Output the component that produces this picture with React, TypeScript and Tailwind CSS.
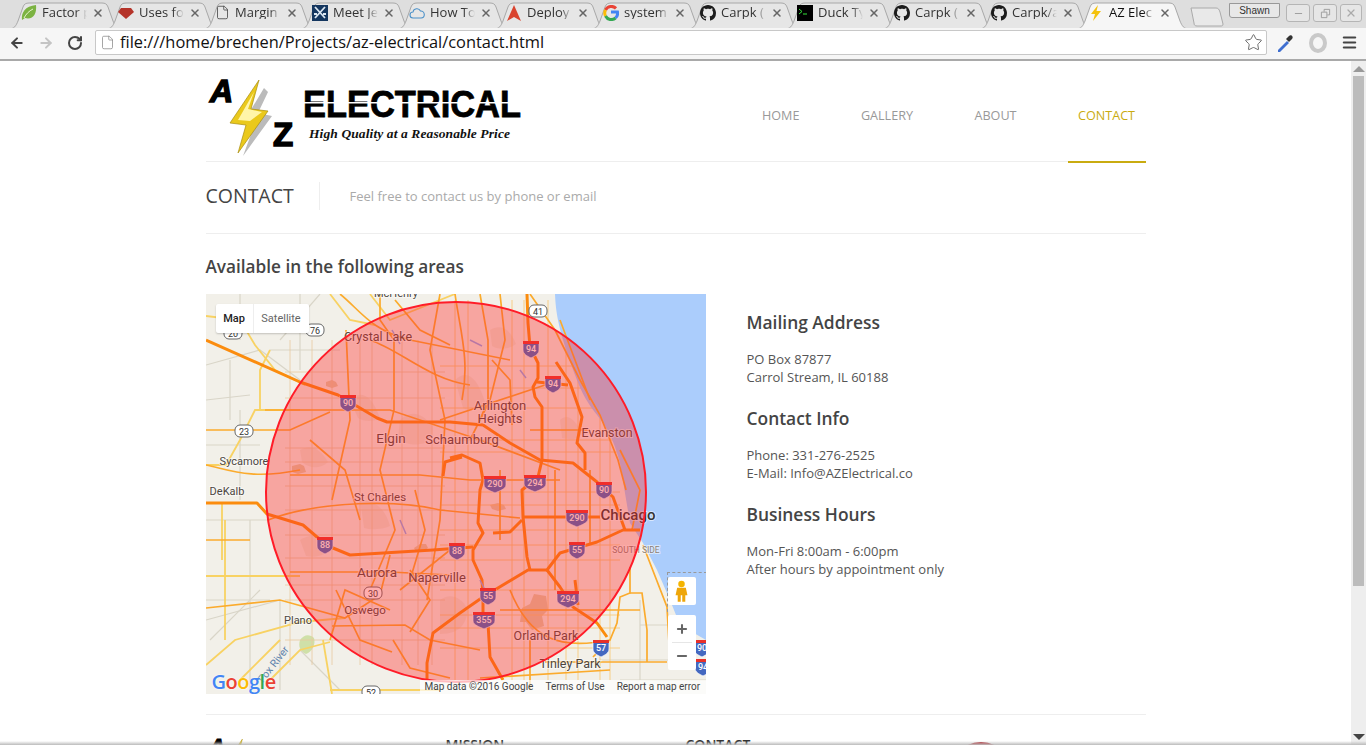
import { ArrowLeft, ArrowRight, RotateCw, File, Star, X, Menu, Minus, Plus } from "lucide-react";

const tabs = [
  { title: "Factor p", icon: "leaf" },
  { title: "Uses fo", icon: "ruby" },
  { title: "Margin", icon: "file" },
  { title: "Meet Je", icon: "meet" },
  { title: "How To", icon: "cloud" },
  { title: "Deploy", icon: "deploy" },
  { title: "system", icon: "google" },
  { title: "Carpk (", icon: "github" },
  { title: "Duck Ty", icon: "term" },
  { title: "Carpk (", icon: "github" },
  { title: "Carpk/a", icon: "github" },
  { title: "AZ Elec", icon: "bolt", active: true },
];

const GITHUB =
  "M8 0C3.58 0 0 3.58 0 8c0 3.54 2.29 6.53 5.47 7.59.4.07.55-.17.55-.38 0-.19-.01-.82-.01-1.49-2.01.37-2.53-.49-2.69-.94-.09-.23-.48-.94-.82-1.13-.28-.15-.68-.52-.01-.53.63-.01 1.08.58 1.23.82.72 1.21 1.87.87 2.33.66.07-.52.28-.87.51-1.07-1.78-.2-3.64-.89-3.64-3.95 0-.87.31-1.59.82-2.15-.08-.2-.36-1.02.08-2.12 0 0 .67-.21 2.2.82.64-.18 1.32-.27 2-.27s1.36.09 2 .27c1.53-1.04 2.2-.82 2.2-.82.44 1.1.16 1.92.08 2.12.51.56.82 1.27.82 2.15 0 3.07-1.87 3.75-3.65 3.95.29.25.54.73.54 1.48 0 1.07-.01 1.93-.01 2.2 0 .21.15.46.55.38A8.01 8.01 0 0 0 16 8c0-4.42-3.58-8-8-8z";

function TabIcon({ name }: { name: string }) {
  if (name === "leaf")
    return (
      <svg viewBox="0 0 16 16" className="w-4 h-4 shrink-0">
        <path d="M1 15C0 8 4 1 15 0c1 9-3 15-11 13l-3 2z" fill="#7cb342" />
        <path d="M3 13C5 9 8 6 12 4" stroke="#e8f5d0" fill="none" />
      </svg>
    );
  if (name === "ruby")
    return (
      <svg viewBox="0 0 16 16" className="w-4 h-4 shrink-0">
        <path d="M3 3h10l3 4-8 7-8-7z" fill="#b5342a" />
      </svg>
    );
  if (name === "file") return <File size={15} strokeWidth={1.3} className="text-[#444] shrink-0" />;
  if (name === "meet")
    return (
      <svg viewBox="0 0 16 16" className="w-4 h-4 shrink-0">
        <rect width="16" height="16" fill="#14365f" />
        <path d="M3 2l10 11M13 2L3 13M2 9h3M11 9h3" stroke="#dbe7f2" strokeWidth="1.8" />
      </svg>
    );
  if (name === "cloud")
    return (
      <svg viewBox="0 0 16 16" className="w-4 h-4 shrink-0">
        <path d="M4 13a3 3 0 0 1 0-6 4 4 0 0 1 7.500-1A3.500 3.500 0 0 1 12 13z" fill="none" stroke="#4a90c8" strokeWidth="1.1" />
      </svg>
    );
  if (name === "deploy")
    return (
      <svg viewBox="0 0 16 16" className="w-4 h-4 shrink-0">
        <path d="M8 0l7 16-7-4-7 4z" fill="#d9442f" />
      </svg>
    );
  if (name === "google")
    return (
      <svg viewBox="0 0 16 16" className="w-4 h-4 shrink-0" fill="none" strokeWidth="3">
        <path d="M13 3.400A6.500 6.500 0 0 0 2.500 5" stroke="#ea4335" />
        <path d="M2.500 5a6.500 6.500 0 0 0 0 6" stroke="#fbbc05" />
        <path d="M2.500 11a6.500 6.500 0 0 0 10 2" stroke="#34a853" />
        <path d="M12.500 13A6.500 6.500 0 0 0 14.500 7H8" stroke="#4285f4" />
      </svg>
    );
  if (name === "github")
    return (
      <svg viewBox="0 0 16 16" className="w-4 h-4 shrink-0">
        <path d={GITHUB} fill="#1b1b1b" />
      </svg>
    );
  if (name === "term")
    return (
      <svg viewBox="0 0 16 16" className="w-4 h-4 shrink-0">
        <rect width="16" height="16" fill="#000" />
        <path d="M2 4l3 2.500L2 9M6 9h4" stroke="#35e23a" fill="none" />
      </svg>
    );
  return (
    <svg viewBox="0 0 16 16" className="w-4 h-4 shrink-0">
      <path d="M10 0L3 9h4l-2 7 8-10H8.500z" fill="#f4c20d" />
    </svg>
  );
}

function Tab({ title, icon, active }: { title: string; icon: string; active?: boolean }) {
  return (
    <div className="relative w-[113px] h-[26px] -mr-[16px] flex items-center pl-[12px] pr-[18px] pb-[5px] shrink-0">
      <svg viewBox="0 0 113 27" className="absolute inset-0 w-[113px] h-[27px]">
        <path
          d="M0 27C5 27 7 24 9 19L14 5C15 2 17 1 20 1H93C96 1 98 2 99 5L104 19C106 24 108 27 113 27"
          fill={active ? "#f6f6f6" : "#e6e6e6"}
          stroke="#a8a8a8"
        />
      </svg>
      <div className="relative flex items-center gap-[5px] w-full">
        <TabIcon name={icon} />
        <span
          className={`flex-1 overflow-hidden whitespace-nowrap text-[13px] leading-none [mask-image:linear-gradient(to_right,black_75%,transparent)] ${
            active ? "text-[#111]" : "text-[#333]"
          }`}
        >
          {title}
        </span>
        <X size={12} strokeWidth={3} className="text-[#666] shrink-0" />
      </div>
    </div>
  );
}

function BrowserChrome() {
  return (
    <div className="h-[61px] shrink-0 flex flex-col font-['Open_Sans',sans-serif]">
      <div className="h-[28px] bg-[#dedede] flex items-end pl-[9px] overflow-hidden relative">
        {tabs.map((t, i) => (
          <Tab key={i} title={t.title} icon={t.icon} active={t.active} />
        ))}
        <svg viewBox="0 0 34 20" className="w-[34px] h-[20px] ml-[17px] mb-[1px] shrink-0">
          <path d="M1 1H26C28 1 29 2 30 5L33 17C33 19 32 19 30 19H7C5 19 4 18 4 16z" fill="#e9e9e9" stroke="#aaa" />
        </svg>
        <div className="ml-auto self-start flex items-start gap-[3px] pr-[4px] pt-[4px]">
          <div className="mr-[3px] -mt-[1px] w-[51px] h-[15px] rounded-b-[3px] border border-[#999] bg-[#e8e8e8] text-[10px] leading-[13px] text-center text-[#333] font-['Liberation_Sans',sans-serif]">
            Shawn
          </div>
          <div className="w-[24px] h-[18px] flex items-center justify-center border border-[#b5b5b5] rounded-[3px] bg-[#e6e6e6] text-[#999]">
            <Minus size={11} />
          </div>
          <div className="w-[24px] h-[18px] flex items-center justify-center border border-[#b5b5b5] rounded-[3px] bg-[#e6e6e6] text-[#999]">
            <svg viewBox="0 0 12 12" className="w-[11px] h-[11px]" fill="none" stroke="currentColor">
              <path d="M1.500 4.500h6v6h-6zM4.500 4V1.500h6v6H8" />
            </svg>
          </div>
          <div className="w-[22px] h-[18px] flex items-center justify-center border border-[#b5b5b5] rounded-[3px] bg-[#e6e6e6] text-[#aaa]">
            <X size={12} strokeWidth={2.5} />
          </div>
        </div>
      </div>
      <div className="h-[33px] bg-[#f6f6f6] border-b-2 border-[#a9a9a9] flex items-center pb-[2px]">
        <div className="w-[95px] flex items-center pl-[9px] gap-[13px] shrink-0">
          <ArrowLeft size={16} strokeWidth={3} className="text-[#444]" />
          <ArrowRight size={16} strokeWidth={3} className="text-[#c4c4c4]" />
          <RotateCw size={16} strokeWidth={3} className="text-[#444]" />
        </div>
        <div className="flex-1 h-[25px] bg-white border border-[#c8c8c8] rounded-[2px] flex items-center pl-[4px] pr-[3px]">
          <File size={15} strokeWidth={1.2} className="text-[#888] mr-[5px]" />
          <span className="text-[16.4px] text-[#111] leading-none whitespace-nowrap">file:///home/brechen/Projects/az-electrical/contact.html</span>
          <Star size={19} strokeWidth={1.2} className="ml-auto text-[#666]" />
        </div>
        <div className="w-[99px] flex items-center pl-[8px] gap-[13px] shrink-0">
          <svg viewBox="0 0 20 20" className="w-5 h-5">
            <path d="M3 17l9-9 2 2-9 9H3z" fill="#3f6fd0" />
            <path d="M11 6l3-3c2-2 5 1 3 3l-3 3z" fill="#333" />
          </svg>
          <svg viewBox="0 0 20 20" className="w-5 h-5">
            <ellipse cx="10" cy="10" rx="7" ry="8" fill="none" stroke="#c9c9c9" strokeWidth="4" />
          </svg>
          <Menu size={17} strokeWidth={3} className="text-[#444]" />
        </div>
      </div>
    </div>
  );
}

function Logo({ small }: { small?: boolean }) {
  return (
    <svg viewBox="206 74 320 84" className={small ? "w-[218px] h-[57px]" : "w-[320px] h-[84px]"}>
      <text x="210" y="102" fontFamily="Liberation Sans" fontWeight="700" fontStyle="italic" fontSize="32" stroke="#000" strokeWidth="1.5" fill="#000">
        A
      </text>
      <text x="273" y="146" fontFamily="Liberation Sans" fontWeight="700" fontSize="33" stroke="#000" strokeWidth="1.5" fill="#000">
        Z
      </text>
      <path d="M264 88L246 118 256 121 243 156 272 116 258 113 268 92z" fill="#bbb" />
      <path d="M259 80L230 123 246 125 238 153 268 111 251 109z" fill="#eac91c" stroke="#a88d10" strokeWidth="0.7" />
      <path d="M254 92L238 120 250 121 262 112 248 109z" fill="#fff5a8" />
      <text
        x="303"
        y="116.500"
        fontFamily="Liberation Sans"
        fontWeight="700"
        fontSize="37"
        textLength="218"
        lengthAdjust="spacingAndGlyphs"
        fill="#000"
        stroke="#000"
        strokeWidth="0.8"
      >
        ELECTRICAL
      </text>
      <rect x="303" y="102" width="218" height="1.500" fill="#fff" />
      <text x="309" y="138" fontFamily="Liberation Serif" fontWeight="700" fontStyle="italic" fontSize="13.500" textLength="201" fill="#111">
        High Quality at a Reasonable Price
      </text>
    </svg>
  );
}

const highways = [
  "M206 340L300 382 338 395 377 418 387 422H450L483 425 510 443 540 460 573 463 597 482 613 497 625 530",
  "M527 294L528 323 530 347 538 363V378L533 387 535 397 542 407V460L538 477 522 490 523 517 527 557 530 570",
  "M556 362L570 383 582 417 577 443 585 453V470",
  "M537 382L568 385",
  "M450 458L462 455 480 463 483 480 480 490 478 523 483 533 473 550V560L482 580 483 597V613L488 623 490 657 503 680",
  "M523 517H600",
  "M493 533L510 532 522 520",
  "M427 680V663L433 633 460 613 483 597 528 570H547L560 553 597 542 623 530H640",
  "M206 503H257L267 514 303 525 317 537 333 548 350 555 433 550 473 547",
  "M547 570L560 587 573 607 597 623 607 637",
  "M443 476L445 462 462 457",
  "M575 580L578 605",
];

const arterials = [
  "M206 430H290L330 412",
  "M206 540H250",
  "M206 465C230 470 250 480 300 470",
  "M206 608L280 600 345 618 380 595 390 555",
  "M340 294C360 310 370 330 410 340L510 360",
  "M346 330L350 420 332 500",
  "M380 294V320L394 340V410L380 470 395 530 370 590",
  "M440 294L430 350 445 420 440 520 427 600",
  "M480 294L488 340V400L480 420",
  "M500 294L505 340 490 400 470 440",
  "M265 410H390L480 440 560 470",
  "M290 475H420L470 480H560",
  "M268 520C320 500 400 500 440 510L520 518",
  "M290 572H390L450 575",
  "M332 626L405 625 430 640 480 650",
  "M330 640L345 590 390 610",
  "M393 640L410 668 450 678",
  "M400 590L450 550",
  "M410 632L430 600 410 570",
  "M530 294L555 330 580 380 600 415 618 460 626 490",
  "M620 450L640 490 632 530",
  "M630 567V593L620 597 617 623 610 640 593 657",
  "M630 593H642L647 630V662",
  "M643 545L667 607 670 662",
  "M545 662H667",
  "M480 678L610 670",
  "M500 610H640",
  "M440 420L560 380",
  "M560 320L590 400",
  "M492 360L510 380 512 425",
  "M530 430L590 430",
  "M500 470V540",
  "M555 470V590",
  "M590 470V545",
  "M510 590C530 640 560 650 610 640",
  "M530 640V690",
  "M370 340C400 350 430 380 470 385",
  "M310 440L345 470 360 520",
  "M336 590L360 640 392 652",
  "M415 490L425 530 410 580",
  "M455 294C460 330 470 360 462 400",
  "M395 300L420 330 450 345",
];

const yellowRoads = [
  "M206 665L235 640 300 622 345 618",
  "M206 576H300",
  "M225 520V640",
  "M206 465H226L240 440 255 410H300",
  "M206 316L240 320 255 345 275 370 305 385",
  "M260 410V370L270 350",
  "M330 294L350 320 375 325",
  "M370 294L390 320 455 294",
  "M323 640L332 694",
  "M270 680L300 650 330 642",
  "M330 690H440",
  "M222 503V560",
  "M240 680L280 640",
];

const greyRoads = [
  "M206 365L260 350 300 380",
  "M230 360V420",
  "M206 400L250 395",
  "M240 410V500",
  "M206 620L280 600",
  "M250 520V690",
  "M280 600V690",
  "M206 520H270",
  "M210 640L260 590",
  "M300 650L340 690",
  "M240 294V340",
  "M300 294V370",
  "M640 600V680",
  "M600 660H706",
  "M620 680H706",
  "M640 625H680",
  "M206 600H270",
  "M270 350H340",
  "M206 445H260",
  "M320 294L280 340",
];

const shields = [
  { x: 348, y: 403, n: "90" },
  { x: 531, y: 349, n: "94" },
  { x: 553, y: 384, n: "94" },
  { x: 495, y: 484, n: "290", wide: true },
  { x: 535, y: 483, n: "294", wide: true },
  { x: 604, y: 490, n: "90" },
  { x: 577, y: 518, n: "290", wide: true },
  { x: 577, y: 550, n: "55" },
  { x: 325, y: 545, n: "88" },
  { x: 457, y: 551, n: "88" },
  { x: 488, y: 596, n: "55" },
  { x: 568, y: 599, n: "294", wide: true },
  { x: 484, y: 620, n: "355", wide: true },
  { x: 601, y: 648, n: "57" },
  { x: 702, y: 648, n: "90" },
  { x: 703, y: 667, n: "94" },
];

const roadBadges = [
  { x: 233, y: 333, n: "20" },
  { x: 315, y: 330, n: "76" },
  { x: 244, y: 431, n: "23" },
  { x: 538, y: 311, n: "41" },
  { x: 373, y: 593, n: "30" },
  { x: 371, y: 692, n: "52" },
];

const labels = [
  { x: 378, y: 341, t: "Crystal Lake", s: 12.5 },
  { x: 396, y: 297, t: "McHenry", s: 11 },
  { x: 500, y: 410, t: "Arlington", s: 13 },
  { x: 500, y: 423, t: "Heights", s: 13 },
  { x: 391, y: 443, t: "Elgin", s: 13.5 },
  { x: 462, y: 444, t: "Schaumburg", s: 13 },
  { x: 607, y: 437, t: "Evanston", s: 12.5 },
  { x: 244, y: 465, t: "Sycamore", s: 11 },
  { x: 227, y: 495, t: "DeKalb", s: 11 },
  { x: 380, y: 501, t: "St Charles", s: 11.5 },
  { x: 628, y: 520, t: "Chicago", s: 15 },
  { x: 636, y: 553, t: "SOUTH SIDE", s: 8.5 },
  { x: 377, y: 577, t: "Aurora", s: 13.5 },
  { x: 437, y: 582, t: "Naperville", s: 13 },
  { x: 365, y: 614, t: "Oswego", s: 11.5 },
  { x: 298, y: 624, t: "Plano", s: 11 },
  { x: 546, y: 640, t: "Orland Park", s: 12.5 },
  { x: 570, y: 668, t: "Tinley Park", s: 12.5 },
];

const towns = [
  "M400 420c10-10 22-8 32 6 2 10-4 18-12 18-8 2-20-2-22-6z",
  "M455 380c8-8 20-10 30 22-6 8-16 10-22 6z",
  "M360 500c10 0 24 4 30 26-8 4-20 4-26 2z",
  "M300 540c10-6 20-8 30 10-6 6-16 8-24 6z",
  "M350 400c8-8 20-10 30 18-6 4-16 4-22 0z",
  "M440 600c8-6 20-6 28 10-2 12-6 24-28 24z",
  "M560 420c6-6 14-4 22 14-4 6-12 6-20 4z",
  "M490 330c10-6 20-2 26 14-8 6-18 6-24 2z",
  "M300 450c10-6 20-2 28 12-8 8-20 6-26 0z",
];

const tanPatches = [
  "M522 608l8-4 4-10 12 2 2 14-6 6 2 10-12 4-6-8-6 0z",
  "M292 466l8-2 4 2 2 6-8 2-6-2z",
  "M326 382l6-2 4 2 2 4-6 2-6-2z",
  "M414 548l6-4 6 0 2 4-6 4-6 0z",
  "M490 505l8-2 6 2 2 4-8 2-6-2z",
];

function MapArt() {
  const rows = [366, 388, 408, 440, 452, 492, 505, 530, 545, 560, 590, 615, 628, 648];
  const cols = [455, 468, 512, 524, 548, 566, 578, 600, 610];
  const westRows = [372, 398, 448, 462, 486, 510, 535, 558, 585, 600, 640];
  const westCols = [290, 312, 332, 360, 372, 402, 418, 432];
  return (
    <svg viewBox="206 294 500 400" className="absolute inset-0 w-full h-full font-['Roboto',sans-serif]">
      <rect x="206" y="294" width="500" height="400" fill="#f2f0e9" />
      {towns.map((d, i) => (
        <path key={i} d={d} fill="#ece6d6" />
      ))}
      {tanPatches.map((d, i) => (
        <path key={i} d={d} fill="#e3cba6" />
      ))}
      <path d="M300 640c4-6 10-6 14-2 2 6-2 14-8 16-6-2-8-8-6-14z" fill="#cfe0a8" />
      {greyRoads.map((d, i) => (
        <path key={i} d={d} fill="none" stroke="#d9d5c8" strokeWidth="1.2" />
      ))}
      {westRows.map((y) => (
        <path key={y} d={`M285 ${y}H445`} stroke="#e8c9a0" strokeWidth="0.8" />
      ))}
      {westCols.map((x) => (
        <path key={x} d={`M${x} 340V665`} stroke="#e8c9a0" strokeWidth="0.8" />
      ))}
      {rows.map((y) => (
        <path key={y} d={`M440 ${y}H620`} stroke="#f7c97a" strokeWidth="0.9" />
      ))}
      {cols.map((x) => (
        <path key={x} d={`M${x} 300V680`} stroke="#f7c97a" strokeWidth="0.9" />
      ))}
      <path d="M555 294C556 320 562 340 577 380S607 413 620 463L630 523 643 543 657 570 670 600 680 625 706 640V294z" fill="#abcdfc" />
      {yellowRoads.map((d, i) => (
        <path key={i} d={d} fill="none" stroke="#f8d263" strokeWidth="1.800" />
      ))}
      {arterials.map((d, i) => (
        <path key={i} d={d} fill="none" stroke="#fbab2d" strokeWidth="1.700" />
      ))}
      {highways.map((d, i) => (
        <path key={i} d={d} fill="none" stroke="#fb8c0e" strokeWidth="3" strokeLinejoin="round" />
      ))}
      <path d="M392 330l8 14M470 340l12 6M400 520l6 14M520 370l6 8M480 580l6 12" stroke="#8fa9ef" strokeWidth="1.500" />
      {labels.map((l) => (
        <text
          key={l.t}
          x={l.x}
          y={l.y}
          fontSize={l.s}
          textAnchor="middle"
          fill={l.t === "Chicago" ? "#333" : l.t === "SOUTH SIDE" ? "#8b7f76" : "#4c4640"}
          fontWeight={l.t === "Chicago" ? 500 : 400}
          stroke="#fff"
          strokeOpacity="0.55"
          strokeWidth="2"
          paintOrder="stroke"
        >
          {l.t}
        </text>
      ))}
      <text x="273" y="668" fontSize="10.500" fill="#5e83ad" textAnchor="middle" transform="rotate(-52 273 664)">
        Fox River
      </text>
      {roadBadges.map((b) => (
        <g key={b.n}>
          <rect x={b.x - 9} y={b.y - 6} width="18" height="12" rx="5" fill="#fff" stroke="#666" />
          <text x={b.x} y={b.y + 3.5} fontSize="9" textAnchor="middle" fill="#333">
            {b.n}
          </text>
        </g>
      ))}
      {shields.map((s, i) => {
        const w = s.wide ? 11 : 8;
        return (
          <g key={i}>
            <path
              d={`M${s.x - w} ${s.y - 7}H${s.x + w}V${s.y + 1}C${s.x + w} ${s.y + 5} ${s.x + 4} ${s.y + 7} ${s.x} ${s.y + 9}C${s.x - 4} ${s.y + 7} ${s.x - w} ${s.y + 5} ${s.x - w} ${s.y + 1}z`}
              fill="#4468c0"
              stroke="#fff"
              strokeWidth="0.7"
            />
            <rect x={s.x - w} y={s.y - 8} width={2 * w} height="3" fill="#e8312a" />
            <text x={s.x} y={s.y + 3} fontSize="9" textAnchor="middle" fill="#fff" fontWeight="500">
              {s.n}
            </text>
          </g>
        );
      })}
      <circle cx="456" cy="492" r="190" fill="#ff2a2a" fillOpacity="0.38" stroke="#ff1c28" strokeWidth="2" />
    </svg>
  );
}

function MapPanel() {
  return (
    <div className="relative w-[500px] h-[400px] overflow-hidden shrink-0">
      <MapArt />
      <div className="absolute left-[10px] top-[10px] h-[29px] flex bg-white rounded-[2px] text-[11px] font-['Roboto',sans-serif] leading-[29px] shadow-[0_1px_2px_rgba(0,0,0,0.2)]">
        <span className="w-[37px] text-center font-medium text-[#222]">Map</span>
        <span className="w-[56px] text-center text-[#666] border-l border-[#eee]">Satellite</span>
      </div>
      <div className="absolute left-[461px] top-[278px] w-[40px] h-[40px] border border-dashed border-[#999] border-r-0 border-b-0" />
      <div className="absolute left-[462px] top-[283px] w-[28px] h-[28px] bg-white rounded-[2px] flex items-center justify-center">
        <svg viewBox="0 0 12 20" className="w-[13px] h-[22px]">
          <circle cx="6" cy="3.500" r="3" fill="#f4b400" />
          <path d="M2 7h8l1.500 7H9.500V20h-2.800v-6h-1.400v6H2.500V14H.5z" fill="#eea60a" />
        </svg>
      </div>
      <div className="absolute left-[462px] top-[321px] w-[28px] h-[55px] bg-white rounded-[2px] flex flex-col items-center justify-center text-[#666]">
        <Plus size={14} strokeWidth={3.5} />
        <div className="w-[20px] h-px bg-[#e6e6e6] my-[6px]" />
        <Minus size={14} strokeWidth={3.5} />
      </div>
      <div className="absolute left-[6px] bottom-[2px] text-[20px] leading-none font-semibold font-['Open_Sans',sans-serif] tracking-[-0.5px] [text-shadow:0_0_2px_#fff]">
        <span className="text-[#4285f4]">G</span>
        <span className="text-[#ea4335]">o</span>
        <span className="text-[#fbbc05]">o</span>
        <span className="text-[#4285f4]">g</span>
        <span className="text-[#34a853]">l</span>
        <span className="text-[#ea4335]">e</span>
      </div>
      <div className="absolute right-0 bottom-0 h-[14px] w-[286px] bg-white/70 flex items-center pl-[5px] text-[10px] leading-none text-[#444] font-['Roboto',sans-serif] whitespace-nowrap">
        <span>Map data ©2016 Google</span>
        <span className="ml-[12px]">Terms of Use</span>
        <span className="ml-[12px]">Report a map error</span>
      </div>
    </div>
  );
}

function InfoBlock({ title, lines, className }: { title: string; lines: string[]; className?: string }) {
  return (
    <div className={className}>
      <h3 className="text-[17.4px] leading-[24px] font-semibold text-[#444]">{title}</h3>
      <p className="mt-[16px] text-[13px] leading-[18px] text-[#555]">
        {lines.map((l) => (
          <span key={l} className="block">
            {l}
          </span>
        ))}
      </p>
    </div>
  );
}

const navItems = ["HOME", "GALLERY", "ABOUT", "CONTACT"];

export default function App() {
  return (
    <div className="h-screen w-full overflow-hidden flex flex-col bg-white relative">
      <BrowserChrome />
      <div className="flex-1 flex min-h-0">
        <div className="flex-1 overflow-hidden font-['Open_Sans',sans-serif]">
          <div className="w-[940px] mx-auto">
            <header className="h-[101px] border-b border-[#eee] flex justify-between">
              <div className="pt-[13px]">
                <Logo />
              </div>
              <nav className="flex h-[102px]">
                {navItems.map((item) => (
                  <a
                    key={item}
                    className={`h-[102px] leading-[109px] text-[12.6px] px-[10.5px] ml-[40.5px] ${
                      item === "CONTACT" ? "text-[#c9ab10] border-b-2 border-[#c9ab10]" : "text-[#999]"
                    }`}
                  >
                    {item}
                  </a>
                ))}
              </nav>
            </header>
            <div className="h-[72px] border-b border-[#eee] flex items-center pb-[4px]">
              <h1 className="text-[19.5px] text-[#444] w-[114px] h-[28px] leading-[28px] border-r border-[#eee]">CONTACT</h1>
              <span className="ml-[30px] pt-[2px] text-[13px] text-[#aaa]">Feel free to contact us by phone or email</span>
            </div>
            <h2 className="mt-[20px] text-[17.2px] leading-[25px] font-semibold text-[#444]">Available in the following areas</h2>
            <div className="mt-[15px] flex">
              <MapPanel />
              <div className="ml-[41px] pt-[16px]">
                <InfoBlock title="Mailing Address" lines={["PO Box 87877", "Carrol Stream, IL 60188"]} />
                <InfoBlock className="mt-[20px]" title="Contact Info" lines={["Phone: 331-276-2525", "E-Mail: Info@AZElectrical.co"]} />
                <InfoBlock className="mt-[20px]" title="Business Hours" lines={["Mon-Fri 8:00am - 6:00pm", "After hours by appointment only"]} />
              </div>
            </div>
            <footer className="mt-[20px] border-t border-[#eee] flex pt-[20px]">
              <div className="w-[240px]">
                <Logo small />
              </div>
              <h4 className="w-[240px] text-[14px] font-semibold text-[#333] leading-[20px]">MISSION</h4>
              <h4 className="w-[240px] text-[14px] font-semibold text-[#333] leading-[20px]">CONTACT</h4>
              <div className="ml-[25px] mt-[7px] w-[60px] h-[60px] rounded-full border-[8px] border-[#b3202a]" />
            </footer>
          </div>
        </div>
        <div className="w-[15px] shrink-0 bg-[#eeeeee] flex flex-col items-center justify-between pt-[5px] pb-[2px]">
          <div className="flex flex-col items-center">
            <div className="w-0 h-0 border-x-[6px] border-x-transparent border-b-[6px] border-b-[#999]" />
            <div className="w-[11px] h-[510px] bg-[#bcbcbc] mt-[4px]" />
          </div>
          <div className="w-0 h-0 border-x-[6px] border-x-transparent border-t-[6px] border-t-[#444] mb-[3px]" />
        </div>
      </div>
      <div className="absolute left-0 right-0 bottom-0 h-[4px] bg-gradient-to-b from-transparent to-[#bbb]" />
    </div>
  );
}
